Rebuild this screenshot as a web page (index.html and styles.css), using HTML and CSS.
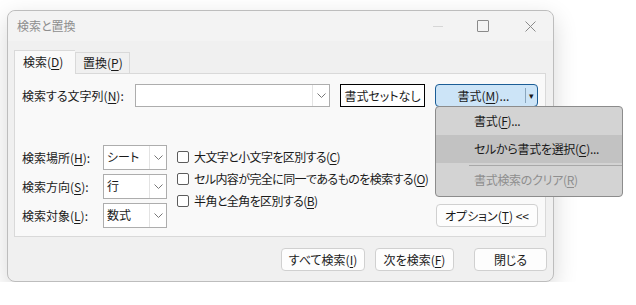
FILE: index.html
```html
<!DOCTYPE html>
<html lang="ja">
<head>
    <meta charset="UTF-8">
    <title>検索と置換</title>
    <link rel="stylesheet" href="styles.css">
</head>
<body>
    <div class="dialog">
        <div class="titlebar">
            <span class="title">検索と置換</span>
            <div class="title-controls">
                <span class="ctl ctl-min"></span>
                <span class="ctl ctl-max"></span>
                <svg class="ctl ctl-close" width="11" height="11" viewBox="0 0 11 11"><path d="M0.5 0.5 L10.5 10.5 M10.5 0.5 L0.5 10.5" stroke="#8a8a8a" stroke-width="1"/></svg>
            </div>
        </div>

        <div class="content">
            <div class="tabs">
                <div class="tab active">検索(<u>D</u>)</div>
                <div class="tab">置換(<u>P</u>)</div>
            </div>

            <div class="panel">
                <div class="find-row">
                    <label class="find-label">検索する文字列(<u>N</u>):</label>
                    <div class="combo">
                        <span class="combo-text"></span>
                        <span class="combo-btn"><svg width="9" height="5" viewBox="0 0 9 5"><path d="M0.5 0.5 L4.5 4.5 L8.5 0.5" fill="none" stroke="#777"/></svg></span>
                    </div>
                    <button class="btn btn-default">書式セットなし</button>
                    <div class="split-wrap">
                        <div class="split">
                            <span class="split-main">書式(<u>M</u>)...</span>
                            <span class="split-sep"></span>
                            <span class="split-arrow">▾</span>
                        </div>
                        <div class="menu">
                            <div class="menu-item">書式(<u>F</u>)...</div>
                            <div class="menu-item hover">セルから書式を選択(<u>C</u>)...</div>
                            <div class="menu-sep"></div>
                            <div class="menu-item disabled">書式検索のクリア(<u>R</u>)</div>
                        </div>
                    </div>
                </div>

                <div class="options">
                    <div class="selects">
                        <div class="sel-row">
                            <label class="sel-label">検索場所(<u>H</u>):</label>
                            <div class="select"><span class="select-text">シート</span><span class="select-btn"><svg width="9" height="5" viewBox="0 0 9 5"><path d="M0.5 0.5 L4.5 4.5 L8.5 0.5" fill="none" stroke="#777"/></svg></span></div>
                        </div>
                        <div class="sel-row">
                            <label class="sel-label">検索方向(<u>S</u>):</label>
                            <div class="select"><span class="select-text">行</span><span class="select-btn"><svg width="9" height="5" viewBox="0 0 9 5"><path d="M0.5 0.5 L4.5 4.5 L8.5 0.5" fill="none" stroke="#777"/></svg></span></div>
                        </div>
                        <div class="sel-row">
                            <label class="sel-label">検索対象(<u>L</u>):</label>
                            <div class="select"><span class="select-text">数式</span><span class="select-btn"><svg width="9" height="5" viewBox="0 0 9 5"><path d="M0.5 0.5 L4.5 4.5 L8.5 0.5" fill="none" stroke="#777"/></svg></span></div>
                        </div>
                    </div>

                    <div class="checks">
                        <div class="check"><span class="box"></span>大文字と小文字を区別する(<u>C</u>)</div>
                        <div class="check"><span class="box"></span>セル内容が完全に同一であるものを検索する(<u>O</u>)</div>
                        <div class="check"><span class="box"></span>半角と全角を区別する(<u>B</u>)</div>
                    </div>

                    <button class="btn btn-options">オプション(<u>T</u>) &lt;&lt;</button>
                </div>
            </div>

            <div class="footer">
                <button class="btn btn-all">すべて検索(<u>I</u>)</button>
                <button class="btn btn-next">次を検索(<u>F</u>)</button>
                <button class="btn btn-close">閉じる</button>
            </div>
        </div>
    </div>
</body>
</html>
```

FILE: styles.css
```css
body {
    margin: 0;
    background-color: #fff;
    font-family: "Noto Sans CJK JP", "Noto Sans", sans-serif;
    font-size: 12px;
    font-feature-settings: "palt";
    color: #1a1a1a;
    white-space: nowrap;
    overflow: hidden;
}

u {
    text-decoration: underline;
    text-underline-offset: 2px;
}

.dialog {
    margin: 10px 0 0 7px;
    width: 547px;
    height: 272px;
    box-sizing: border-box;
    border: 1px solid #bdbdbd;
    border-radius: 8px;
    background-color: #f0f0f0;
    box-shadow: 0 8px 24px rgba(0, 0, 0, 0.16);
    display: flex;
    flex-direction: column;
}

.titlebar {
    height: 30px;
    flex: none;
    background-color: #f3f3f3;
    border-top-left-radius: 8px;
    border-top-right-radius: 8px;
    display: flex;
    align-items: center;
    padding-left: 9px;
}

.title {
    color: #8e8e8e;
    margin-top: -1px;
}

.title-controls {
    margin-left: auto;
    display: flex;
    align-items: center;
}

.ctl-min {
    width: 10px;
    height: 1px;
    background-color: #d6d6d6;
    margin-right: 34px;
}

.ctl-max {
    width: 10px;
    height: 10px;
    border: 1px solid #8a8a8a;
    border-radius: 1px;
    margin-right: 36px;
}

.ctl-close {
    margin-right: 17px;
}

.content {
    flex: 1;
    display: flex;
    flex-direction: column;
    padding: 9px 7px 0 6px;
}

.tabs {
    display: flex;
    align-items: flex-end;
    height: 23px;
    position: relative;
    z-index: 1;
}

.tab {
    height: 21px;
    line-height: 20px;
    padding: 0 0 0 7px;
    box-sizing: border-box;
    border: 1px solid #d9d9d9;
    border-bottom: none;
    background-color: #f0f0f0;
    width: 55px;
}

.tab.active {
    height: 24px;
    margin-bottom: -1px;
    width: 61px;
    line-height: 22px;
    padding-left: 8px;
    background-color: #f9f9f9;
    border-right: none;
}

.panel {
    height: 164px;
    box-sizing: border-box;
    border: 1px solid #d9d9d9;
    background-color: #f9f9f9;
    padding: 10px 7px 0 7px;
    display: flex;
    flex-direction: column;
}

.find-row {
    display: flex;
    align-items: center;
    height: 23px;
}

.find-label {
    width: 113px;
    flex: none;
}

.combo {
    width: 195px;
    flex: none;
    height: 23px;
    box-sizing: border-box;
    border: 1px solid #adadad;
    background-color: #fff;
    display: flex;
}

.combo-text {
    flex: 1;
}

.combo-btn,
.select-btn {
    width: 16px;
    border-left: 1px solid #e3e3e3;
    display: flex;
    align-items: center;
    justify-content: center;
    background-color: #fff;
}

.btn {
    font-family: inherit;
    font-size: 12px;
    font-feature-settings: "palt";
    color: #1a1a1a;
    background-color: #fdfdfd;
    border: 1px solid #d0d0d0;
    border-radius: 4px;
    height: 23px;
    padding: 0;
    box-sizing: border-box;
    white-space: nowrap;
    flex: none;
}

.btn-default {
    margin-left: 10px;
    width: 85px;
    border: 1px solid #000;
    border-radius: 0;
    background-color: #fff;
}

.split-wrap {
    margin-left: 10px;
    position: relative;
    flex: none;
}

.split {
    width: 103px;
    height: 23px;
    box-sizing: border-box;
    border: 1px solid #1b5d96;
    border-radius: 4px;
    background-color: #cce4f7;
    display: flex;
    align-items: center;
}

.split-main {
    flex: 1;
    text-align: center;
    padding-left: 6px;
}

.split-sep {
    width: 1px;
    height: 15px;
    background-color: #8aa6bd;
}

.split-arrow {
    width: 10px;
    text-align: center;
    font-size: 9px;
    margin-right: 1px;
}

.menu {
    position: absolute;
    top: 22px;
    left: 0;
    width: 188px;
    box-sizing: border-box;
    border: 1px solid #8c8c8c;
    border-radius: 4px;
    background-color: #d3d3d3;
    padding: 0 0 3px;
    z-index: 2;
    overflow: hidden;
    letter-spacing: -0.3px;
}

.menu-item {
    height: 28px;
    line-height: 28px;
    padding-left: 38px;
}

.menu-item.hover {
    background-color: #c2c2c2;
}

.menu-item.disabled {
    color: #8e8e8e;
    height: 27px;
    line-height: 27px;
}

.menu-sep {
    height: 1px;
    background-color: #a8a8a8;
    margin: 2px 0 0 33px;
}

.options {
    display: flex;
    margin-top: 38px;
}

.selects {
    display: flex;
    flex-direction: column;
    gap: 4px;
    flex: none;
}

.sel-row {
    display: flex;
    align-items: center;
}

.sel-label {
    width: 81px;
}

.select {
    width: 64px;
    height: 25px;
    box-sizing: border-box;
    border: 1px solid #adadad;
    background-color: #fff;
    display: flex;
}

.select-text {
    flex: 1;
    line-height: 22px;
    padding-left: 3px;
}

.checks {
    margin-left: 10px;
    margin-top: 3px;
    display: flex;
    flex-direction: column;
    gap: 5px;
    flex: 1;
    min-width: 0;
    letter-spacing: -0.6px;
}

.check {
    display: flex;
    align-items: center;
    height: 17px;
}

.box {
    width: 12px;
    height: 12px;
    box-sizing: border-box;
    border: 1px solid #5c5c5c;
    border-radius: 2px;
    background-color: #fff;
    margin-right: 5px;
    flex: none;
}

.btn-options {
    align-self: flex-end;
    width: 102px;
    margin-bottom: 1px;
}

.footer {
    display: flex;
    margin-top: 11px;
    padding-left: 267px;
}

.btn-all {
    width: 84px;
}

.btn-next {
    margin-left: 10px;
    width: 79px;
}

.btn-close {
    margin-left: 20px;
    width: 73px;
}
```
